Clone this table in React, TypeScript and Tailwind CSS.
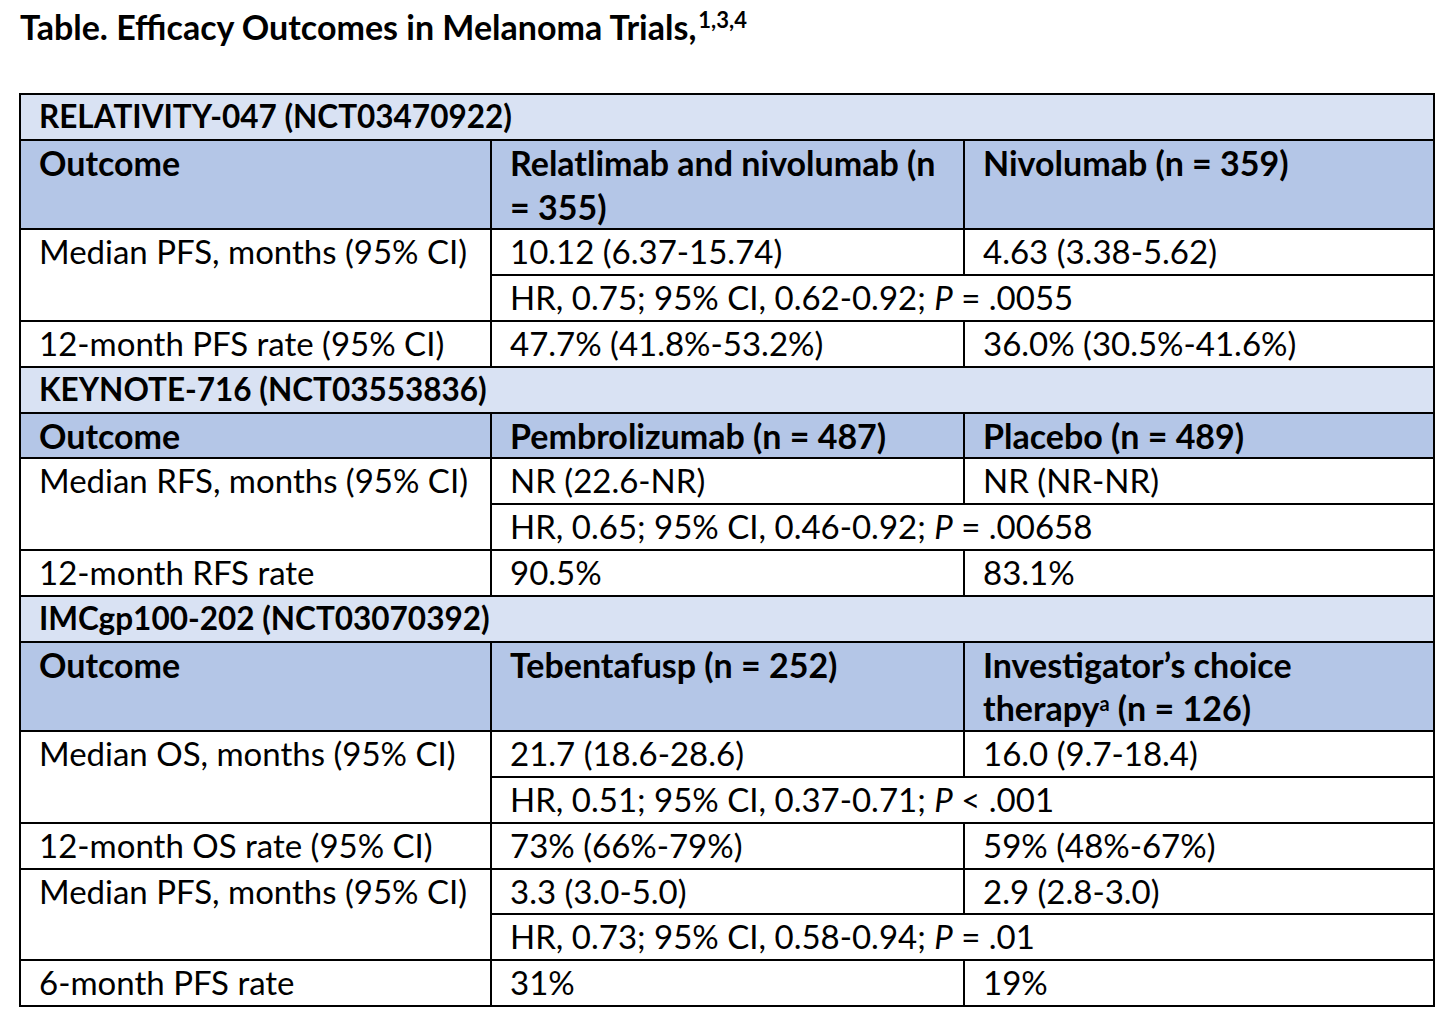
import React from "react";

type Row =
  | { kind: "group"; text: string }
  | { kind: "head"; c1: React.ReactNode; c2: React.ReactNode; c3: React.ReactNode }
  | { kind: "pair"; label: string; a: string; b: string; hr: React.ReactNode }
  | { kind: "plain"; label: string; a: string; b: string };

const td = "border-2 border-black px-[18px] py-0 align-top whitespace-nowrap";

const P = ({ rest }: { rest: string }) => (
  <>
    {rest.split("P")[0]}
    <i>P</i>
    {rest.split("P")[1]}
  </>
);

const rows: Row[] = [
  { kind: "group", text: "RELATIVITY-047 (NCT03470922)" },
  {
    kind: "head",
    c1: "Outcome",
    c2: (
      <>
        Relatlimab and nivolumab (n
        <br />= 355)
      </>
    ),
    c3: "Nivolumab (n = 359)",
  },
  {
    kind: "pair",
    label: "Median PFS, months (95% CI)",
    a: "10.12 (6.37-15.74)",
    b: "4.63 (3.38-5.62)",
    hr: <P rest="HR, 0.75; 95% CI, 0.62-0.92; P = .0055" />,
  },
  { kind: "plain", label: "12-month PFS rate (95% CI)", a: "47.7% (41.8%-53.2%)", b: "36.0% (30.5%-41.6%)" },
  { kind: "group", text: "KEYNOTE-716 (NCT03553836)" },
  { kind: "head", c1: "Outcome", c2: "Pembrolizumab (n = 487)", c3: "Placebo (n = 489)" },
  {
    kind: "pair",
    label: "Median RFS, months (95% CI)",
    a: "NR (22.6-NR)",
    b: "NR (NR-NR)",
    hr: <P rest="HR, 0.65; 95% CI, 0.46-0.92; P = .00658" />,
  },
  { kind: "plain", label: "12-month RFS rate", a: "90.5%", b: "83.1%" },
  { kind: "group", text: "IMCgp100-202 (NCT03070392)" },
  {
    kind: "head",
    c1: "Outcome",
    c2: "Tebentafusp (n = 252)",
    c3: (
      <>
        Investigator’s choice
        <br />
        therapy<span className="relative -top-[10px] text-[20px] leading-none">a</span> (n = 126)
      </>
    ),
  },
  {
    kind: "pair",
    label: "Median OS, months (95% CI)",
    a: "21.7 (18.6-28.6)",
    b: "16.0 (9.7-18.4)",
    hr: <P rest="HR, 0.51; 95% CI, 0.37-0.71; P < .001" />,
  },
  { kind: "plain", label: "12-month OS rate (95% CI)", a: "73% (66%-79%)", b: "59% (48%-67%)" },
  {
    kind: "pair",
    label: "Median PFS, months (95% CI)",
    a: "3.3 (3.0-5.0)",
    b: "2.9 (2.8-3.0)",
    hr: <P rest="HR, 0.73; 95% CI, 0.58-0.94; P = .01" />,
  },
  { kind: "plain", label: "6-month PFS rate", a: "31%", b: "19%" },
];

export default function App() {
  return (
    <div className="min-h-[1020px] w-[1450px] bg-white text-black font-['Lato','Noto_Sans',sans-serif]">
      <h1 className="pl-[20px] pt-[9px] text-[34px] leading-[36px] font-bold whitespace-nowrap">
        Table. Efficacy Outcomes in Melanoma Trials,
        <span className="relative -top-[12px] ml-[2px] text-[22px] leading-none">1,3,4</span>
      </h1>
      <table className="ml-[19px] mt-[48px] w-[1416px] table-fixed border-collapse text-[33px] leading-[43.8px]">
        <colgroup>
          <col className="w-[471px]" />
          <col className="w-[473px]" />
          <col />
        </colgroup>
        <tbody>
          {rows.map((r, i) => {
            if (r.kind === "group")
              return (
                <tr key={i}>
                  <td colSpan={3} className={`${td} bg-[#d9e2f3] font-bold text-[31.5px]`}>
                    {r.text}
                  </td>
                </tr>
              );
            if (r.kind === "head")
              return (
                <tr key={i}>
                  <td className={`${td} bg-[#b4c6e7] font-bold text-[34px]`}>{r.c1}</td>
                  <td className={`${td} bg-[#b4c6e7] font-bold text-[34px]`}>{r.c2}</td>
                  <td className={`${td} bg-[#b4c6e7] font-bold text-[34px]`}>{r.c3}</td>
                </tr>
              );
            if (r.kind === "pair")
              return (
                <React.Fragment key={i}>
                  <tr>
                    <td rowSpan={2} className={td}>
                      {r.label}
                    </td>
                    <td className={td}>{r.a}</td>
                    <td className={td}>{r.b}</td>
                  </tr>
                  <tr>
                    <td colSpan={2} className={td}>
                      {r.hr}
                    </td>
                  </tr>
                </React.Fragment>
              );
            return (
              <tr key={i}>
                <td className={td}>{r.label}</td>
                <td className={td}>{r.a}</td>
                <td className={td}>{r.b}</td>
              </tr>
            );
          })}
        </tbody>
      </table>
    </div>
  );
}
